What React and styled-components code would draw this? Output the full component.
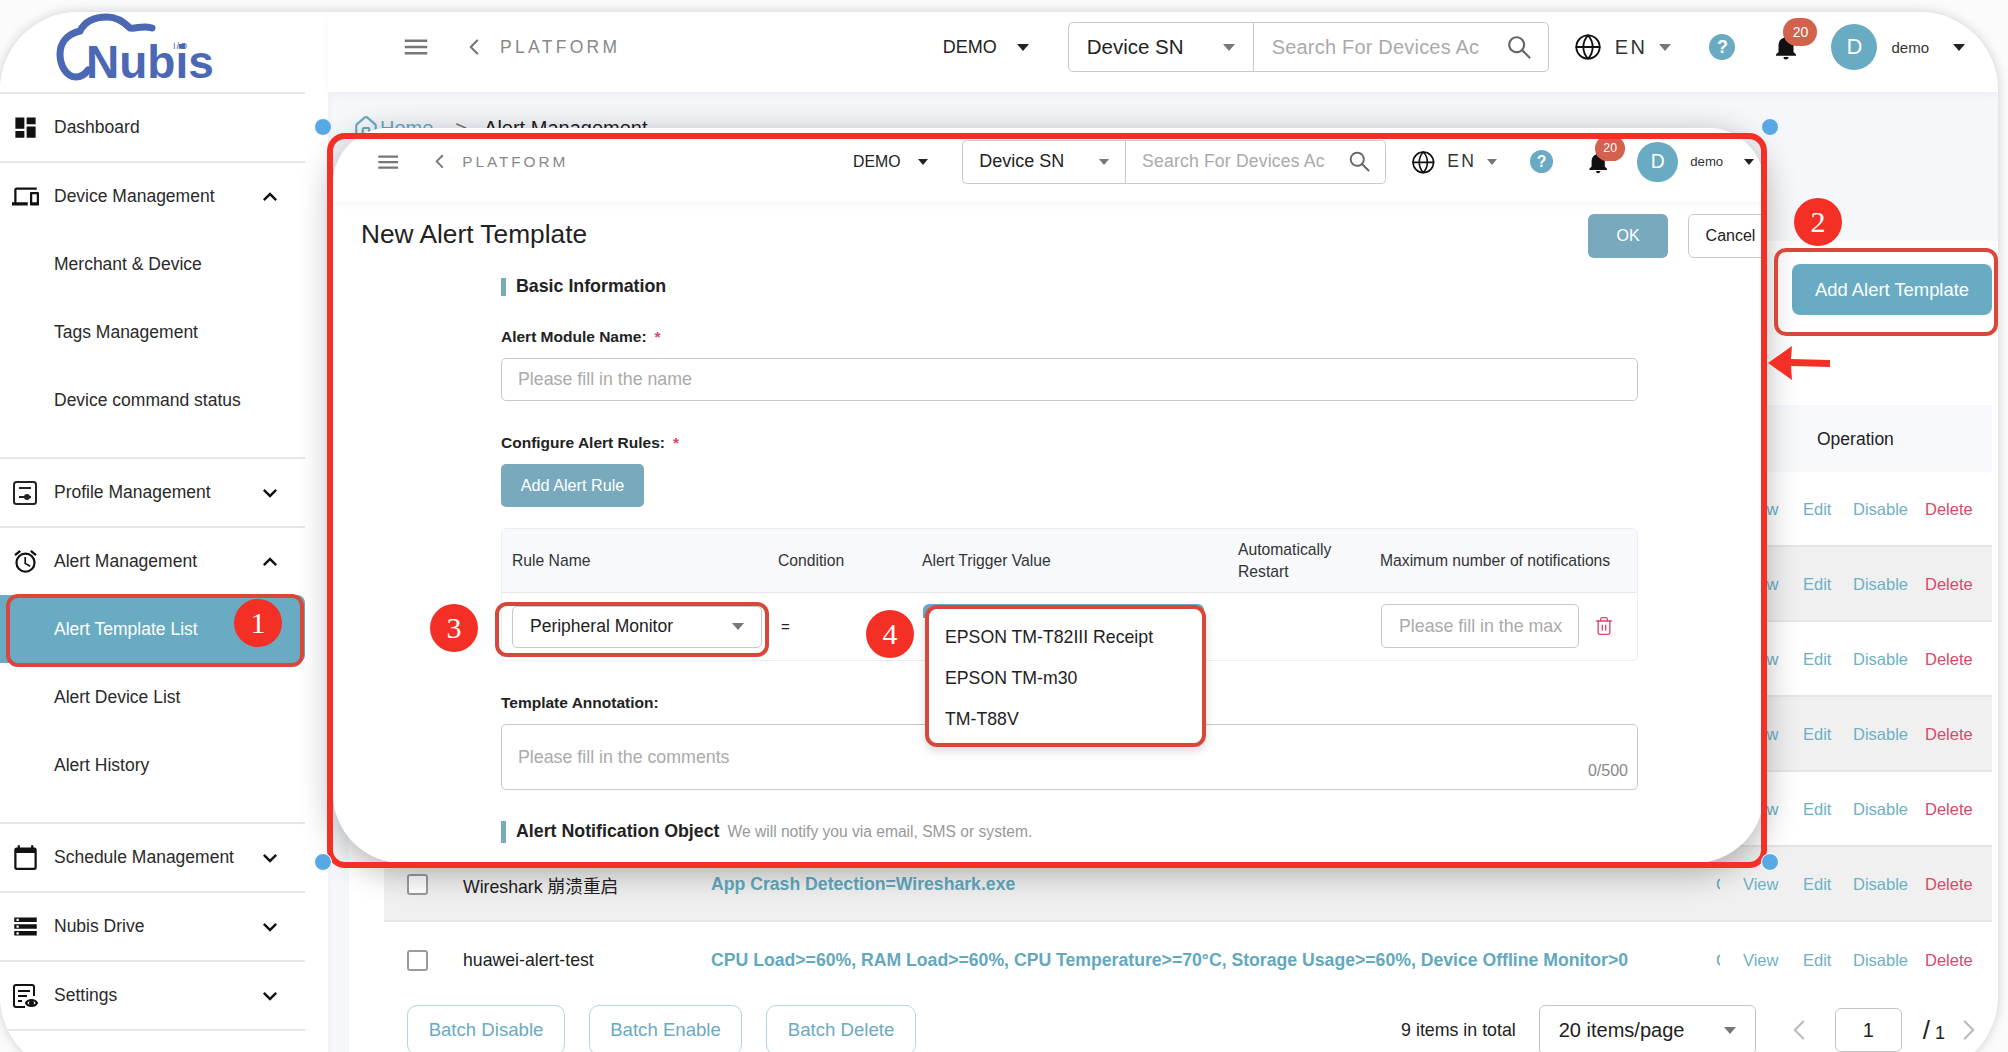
import React from "react";
import styled, { createGlobalStyle } from "styled-components";
import {
  MdDashboard,
  MdOutlineDevices,
  MdOutlineAlarm,
  MdCalendarToday,
  MdStorage,
  MdKeyboardArrowDown,
  MdKeyboardArrowUp,
  MdMenu,
  MdNotifications,
} from "react-icons/md";
import { AiOutlineSearch } from "react-icons/ai";
import { ChevronLeft, ChevronRight, Globe, Trash2, Home } from "lucide-react";

const TEAL = "#68abc2";
const RED = "#f42f25";
const CALLOUT = "#d9473b";
const FONT = `"Liberation Sans", "Noto Sans CJK SC", Arial, sans-serif`;

const GlobalStyle = createGlobalStyle`
  html, body {
    margin: 0;
    padding: 0;
    height: 100%;
    overflow: hidden;
    background: #fff;
  }
  * { box-sizing: border-box; }
  body {
    font-family: ${FONT};
    color: #222;
  }
`;

const Root = styled.div`
  position: relative;
  width: 2008px;
  height: 1052px;
  overflow: hidden;
  background: #fbfbfb;
`;

const Window = styled.div`
  display: flex;
  width: 1998px;
  height: 1062px;
  margin-top: 12px;
  border-radius: 78px;
  overflow: hidden;
  background: #f6f7fb;
  box-shadow: 0 0 12px rgba(0, 0, 0, 0.18);
`;

/* sidebar */
const Sidebar = styled.aside`
  width: 328px;
  flex-shrink: 0;
  padding-right: 23px;
  background: #fff;
  box-shadow: 2px 0 6px rgba(0, 0, 0, 0.03);
`;

const LogoBox = styled.div`
  height: 82px;
  border-bottom: 2px solid #e6e6e6;
`;

const NavGroup = styled.div`
  border-bottom: 2px solid #e6e6e6;
  padding-bottom: ${(p) => p.$pb || 0}px;
`;

const NavRow = styled.div`
  display: flex;
  align-items: center;
  height: 67px;
  padding: 0 21px 0 12px;
  font-size: 17.5px;
  color: #2a2a2a;
`;

const NavIcon = styled.span`
  display: flex;
  align-items: center;
  width: 42px;
  font-size: 27px;
  color: #111;
`;

const NavLabel = styled.span`
  flex: 1;
`;

const NavArrow = styled.span`
  display: flex;
  font-size: 28px;
  color: #111;
`;

const SubItem = styled.div`
  display: flex;
  align-items: center;
  height: 68px;
  padding-left: 54px;
  font-size: 17.5px;
  color: ${(p) => (p.$active ? "#fff" : "#2a2a2a")};
  background: ${(p) => (p.$active ? TEAL : "transparent")};
  border-radius: ${(p) => (p.$active ? "0 8px 8px 0" : "0")};
`;

/* top bar, used at full size and again, shrunk, inside the pasted shot */
const Bar = styled.header`
  display: flex;
  align-items: center;
  height: ${(p) => p.$height}px;
  padding: 0 ${(p) => p.$right}px ${(p) => p.$bottom}px ${(p) => p.$left}px;
  background: #fff;
  box-shadow: 0 3px 8px rgba(0, 0, 0, 0.04);
  ${(p) => (p.$scale ? `zoom: ${p.$scale};` : "")}
  position: relative;
`;

const BurgerIcon = styled(MdMenu)`
  font-size: 30px;
  color: #777;
  margin-right: 30px;
`;

const BackIcon = styled(ChevronLeft)`
  color: #777;
  margin-right: 13px;
`;

const Platform = styled.span`
  font-size: 17.5px;
  letter-spacing: 3.3px;
  color: #888;
`;

const DemoLabel = styled.span`
  margin-left: auto;
  font-size: 18px;
  color: #222;
`;

const Caret = styled.span`
  width: 0;
  height: 0;
  margin-left: ${(p) => p.$ml || 0}px;
  margin-right: ${(p) => p.$mr || 0}px;
  border-left: 6px solid transparent;
  border-right: 6px solid transparent;
  border-top: 7px solid ${(p) => p.$color || "#222"};
`;

const SearchBox = styled.div`
  display: flex;
  align-items: center;
  width: 481px;
  height: 50px;
  border: 1.5px solid #c9c9c9;
  border-radius: 5px;
`;

const SearchType = styled.div`
  display: flex;
  align-items: center;
  justify-content: space-between;
  width: 185px;
  height: 100%;
  padding: 0 18px;
  border-right: 1.5px solid #c9c9c9;
  font-size: 20.5px;
`;

const SearchInput = styled.div`
  display: flex;
  align-items: center;
  justify-content: space-between;
  flex: 1;
  padding: 0 14px 0 18px;
  font-size: 20px;
  letter-spacing: 0.2px;
  color: #aaa;
`;

const SearchIcon = styled(AiOutlineSearch)`
  font-size: 29px;
  color: #666;
`;

const GlobeIcon = styled(Globe)`
  margin-left: ${(p) => p.$ml}px;
  color: #111;
`;

const Lang = styled.span`
  margin-left: 13px;
  font-size: 20px;
  letter-spacing: 2.5px;
  color: #333;
`;

const HelpDot = styled.span`
  display: flex;
  align-items: center;
  justify-content: center;
  width: 26px;
  height: 26px;
  border-radius: 50%;
  background: ${TEAL};
  color: #fff;
  font-weight: 700;
  font-size: 18px;
`;

const BellWrap = styled.span`
  position: relative;
  display: flex;
  font-size: 30px;
  margin-left: 36px;
  color: #111;
`;

const Badge = styled.span`
  position: absolute;
  left: 12px;
  top: -14px;
  width: 34px;
  height: 28px;
  border-radius: 14px;
  background: #d2614e;
  color: #fff;
  font-size: 14px;
  line-height: 28px;
  text-align: center;
`;

const Avatar = styled.span`
  display: flex;
  align-items: center;
  justify-content: center;
  width: 46px;
  height: 46px;
  margin-left: 30px;
  border-radius: 50%;
  background: ${TEAL};
  color: #fff;
  font-size: 22px;
`;

const UserName = styled.span`
  margin-left: 14px;
  font-size: 15px;
  color: #333;
`;

const TopBar = ({ globeGap, ...props }) => (
  <Bar {...props}>
    <BurgerIcon />
    <BackIcon size={26} strokeWidth={2} />
    <Platform>PLATFORM</Platform>
    <DemoLabel>DEMO</DemoLabel>
    <Caret $ml={20} $mr={39} />
    <SearchBox>
      <SearchType>
        Device SN
        <Caret $color="#777" />
      </SearchType>
      <SearchInput>
        Search For Devices Ac
        <SearchIcon />
      </SearchInput>
    </SearchBox>
    <GlobeIcon size={28} strokeWidth={1.6} $ml={globeGap} />
    <Lang>EN</Lang>
    <Caret $ml={12} $mr={38} $color="#777" />
    <HelpDot>?</HelpDot>
    <BellWrap>
      <MdNotifications />
      <Badge>20</Badge>
    </BellWrap>
    <Avatar>D</Avatar>
    <UserName>demo</UserName>
    <Caret $ml={24} />
  </Bar>
);

/* page behind the pasted shot */
const Main = styled.main`
  flex: 1;
  min-width: 0;
  display: flex;
  flex-direction: column;
`;

const Breadcrumb = styled.div`
  display: flex;
  align-items: center;
  gap: 1px;
  height: 24px;
  margin: 24px 0 101px 25px;
  font-size: 20px;
  color: ${TEAL};
`;

const CrumbSep = styled.span`
  margin: 0 16px 0 21px;
  color: #777;
`;

const CrumbNow = styled.span`
  color: #222;
`;

const Card = styled.section`
  flex: 1;
  margin-left: 21px;
  padding: 23px 6px 0 35px;
  background: #fff;
`;

const CardTools = styled.div`
  display: flex;
  justify-content: flex-end;
  margin-bottom: 90px;
`;

const AddButton = styled.button`
  width: 200px;
  height: 51px;
  border: 0;
  border-radius: 8px;
  background: ${TEAL};
  color: #fff;
  font: 18.4px ${FONT};
`;

const ListHead = styled.div`
  display: grid;
  grid-template-columns: 1fr 272px;
  align-items: center;
  height: 67px;
  padding-top: 2px;
  background: #f8f9fc;
  font-size: 17.5px;
`;

const OperationTitle = styled.span`
  padding-left: 97px;
`;

const ListRow = styled.div`
  display: grid;
  grid-template-columns: 79px 248px 1005px 4px 1fr;
  align-items: center;
  height: 75px;
  padding-top: 2px;
  background: ${(p) => (p.$shaded ? "#f0f0f0" : "#fff")};
  border-bottom: 2px solid #e6e6e6;
  ${(p) => (p.$plain ? "border-bottom: 0;" : "")}
`;

const Check = styled.span`
  display: block;
  width: 21px;
  height: 21px;
  margin-left: 23px;
  border: 2px solid #9a9aa5;
  border-radius: 3px;
  background: #fff;
`;

const RowName = styled.span`
  font-size: 17.7px;
  color: #222;
`;

const RowRule = styled.span`
  font-size: 17.65px;
  font-weight: 700;
  color: #62a8be;
  white-space: nowrap;
`;

const RowState = styled.span`
  overflow: hidden;
  font-size: 16.5px;
  color: #62a8be;
`;

const Ops = styled.div`
  display: grid;
  grid-template-columns: 60px 50px 72px auto;
  padding-left: 23px;
  font-size: 16.5px;
`;

const OpLink = styled.span`
  color: ${(p) => (p.$danger ? "#d9486b" : "#6db0c6")};
`;

const ListFoot = styled.div`
  display: flex;
  align-items: flex-start;
  padding: 8px 6px 0 23px;
`;

const BatchButton = styled.button`
  width: ${(p) => p.$w}px;
  height: 50px;
  margin-right: 24px;
  border: 1.5px solid #b4d6e1;
  border-radius: 10px;
  background: #fff;
  color: ${TEAL};
  font: 18.6px ${FONT};
`;

const TotalText = styled.span`
  margin-left: auto;
  padding-top: 15px;
  font-size: 17.8px;
`;

const PageSize = styled.div`
  display: flex;
  align-items: center;
  justify-content: space-between;
  width: 217px;
  height: 50px;
  margin-left: 23px;
  padding: 0 19px;
  border: 1.5px solid #c4c4c4;
  border-radius: 6px;
  font-size: 20px;
`;

const PageNav = styled.span`
  display: flex;
  align-items: center;
  height: 50px;
  margin-left: ${(p) => p.$ml}px;
  color: #bbb;
`;

const PageInput = styled.div`
  display: flex;
  align-items: center;
  justify-content: center;
  width: 67px;
  height: 44px;
  margin: 3px 0 0 19px;
  border: 1.5px solid #c4c4c4;
  border-radius: 6px;
  font-size: 20px;
`;

const PageTotal = styled.span`
  padding-top: 10px;
  margin-left: 21px;
  font-size: 18px;
`;

const Slash = styled.span`
  font-size: 26px;
`;

/* pasted screenshot of the form */
const Shot = styled.div`
  position: absolute;
  left: 333px;
  top: 128px;
  width: 1431px;
  height: 735px;
  overflow: hidden;
  background: #fff;
  border-radius: 56px 56px 70px 70px;
`;

const ShotShadow = styled.div`
  position: absolute;
  left: 333px;
  top: 128px;
  width: 1431px;
  height: 735px;
  border-radius: 56px 56px 70px 70px;
  box-shadow: 0 8px 34px rgba(0, 0, 0, 0.32);
`;

const TitleRow = styled.div`
  display: flex;
  align-items: flex-start;
  margin: 12px -9px 0 0;
  padding-left: 28px;
`;

const ShotTitle = styled.h1`
  flex: 1;
  margin: 0;
  padding-top: 5px;
  font-size: 26.3px;
  line-height: 30px;
  font-weight: 400;
  color: #222;
`;

const ShotButton = styled.button`
  width: ${(p) => p.$w}px;
  height: 44px;
  margin-left: ${(p) => p.$ml}px;
  border: ${(p) => (p.$primary ? "0" : "1.5px solid #c9c9c9")};
  border-radius: 6px;
  background: ${(p) => (p.$primary ? "#78a9bd" : "#fff")};
  color: ${(p) => (p.$primary ? "#fff" : "#222")};
  font: 16px ${FONT};
  flex-shrink: 0;
`;

const Form = styled.div`
  width: 1137px;
  margin-left: 168px;
`;

const SectionTitle = styled.div`
  display: flex;
  align-items: center;
  height: ${(p) => p.$h || 18}px;
  margin-top: ${(p) => p.$mt}px;
  padding-left: 10px;
  border-left: 5px solid #78a9bd;
  font-size: 17.8px;
  font-weight: 700;
  color: #222;
`;

const SectionNote = styled.span`
  margin-left: 8px;
  font-size: 15.6px;
  font-weight: 400;
  color: #999;
`;

const FieldLabel = styled.div`
  height: 18px;
  margin-top: ${(p) => p.$mt}px;
  font-size: 15.5px;
  line-height: 18px;
  font-weight: 700;
  color: #222;
`;

const Star = styled.span`
  margin-left: 8px;
  color: #d9486b;
`;

const TextField = styled.div`
  display: flex;
  align-items: center;
  height: 43px;
  margin-top: 12px;
  padding-left: 16px;
  border: 1.5px solid #c9c9c9;
  border-radius: 5px;
  font-size: 17.8px;
  color: #aaa;
`;

const RuleButton = styled.button`
  display: block;
  width: 143px;
  height: 43px;
  margin-top: 12px;
  border: 0;
  border-radius: 5px;
  background: #78a9bd;
  color: #fff;
  font: 16.2px ${FONT};
`;

const RuleTable = styled.div`
  margin-top: 21px;
  border: 1.5px solid #eceef2;
  border-radius: 5px;
`;

const RuleHead = styled.div`
  display: grid;
  grid-template-columns: 266px 144px 316px 142px 1fr;
  align-items: center;
  height: 64px;
  padding: 1px 0 0 10px;
  background: #f8f9fc;
  border-bottom: 1.5px solid #e6e8ee;
  font-size: 15.7px;
  line-height: 22px;
  color: #333;
`;

const RuleRow = styled.div`
  display: grid;
  grid-template-columns: 266px 144px 459px 198px 1fr;
  align-items: center;
  height: 67px;
  padding-left: 10px;
`;

const RuleSelect = styled.div`
  display: flex;
  align-items: center;
  justify-content: space-between;
  width: 250px;
  height: 42px;
  margin-top: 1px;
  padding: 0 17px;
  border: 1.5px solid #c9c9c9;
  border-radius: 5px;
  font-size: 17.5px;
`;

const Equal = styled.span`
  padding-left: 3px;
  font-size: 15px;
`;

const MaxField = styled.div`
  display: flex;
  align-items: center;
  height: 44px;
  padding-left: 17px;
  border: 1.5px solid #c9c9c9;
  border-radius: 5px;
  font-size: 17.8px;
  color: #aaa;
  white-space: nowrap;
  overflow: hidden;
`;

const TrashIcon = styled(Trash2)`
  margin-left: 15px;
  color: #d9486b;
`;

const NoteField = styled.div`
  position: relative;
  height: 66px;
  margin-top: 12px;
  padding: 22px 0 0 16px;
  border: 1.5px solid #c9c9c9;
  border-radius: 5px;
  font-size: 17.8px;
  color: #aaa;
`;

const Counter = styled.span`
  position: absolute;
  right: 9px;
  bottom: 9px;
  font-size: 16px;
  color: #888;
`;

/* annotations drawn over everything */
const Frame = styled.div`
  position: absolute;
  left: ${(p) => p.$x}px;
  top: ${(p) => p.$y}px;
  width: ${(p) => p.$w}px;
  height: ${(p) => p.$h}px;
  border: ${(p) => p.$border || 4}px solid ${(p) => p.$color || CALLOUT};
  border-radius: ${(p) => p.$radius || 12}px;
`;

const Marker = styled.div`
  position: absolute;
  left: ${(p) => p.$x - 24}px;
  top: ${(p) => p.$y - 24}px;
  width: 48px;
  height: 48px;
  border-radius: 50%;
  background: ${RED};
  color: #fff;
  font: 30px/48px "Liberation Serif", serif;
  text-align: center;
`;

const Handle = styled.div`
  position: absolute;
  left: ${(p) => p.$x - 9}px;
  top: ${(p) => p.$y - 9}px;
  width: 18px;
  height: 18px;
  border-radius: 50%;
  border: 1.5px solid #fff;
  background: #57a8e4;
`;

const MenuStrip = styled.div`
  position: absolute;
  left: 923px;
  top: 604px;
  width: 281px;
  height: 14px;
  border-radius: 6px 6px 0 0;
  background: ${TEAL};
`;

const Menu = styled.div`
  position: absolute;
  left: 925px;
  top: 605px;
  width: 281px;
  height: 142px;
  padding: 8px 0 0 16px;
  border: 4px solid ${CALLOUT};
  border-radius: 12px;
  background: #fff;
  box-shadow: 0 4px 10px rgba(0, 0, 0, 0.14);
`;

const MenuItem = styled.div`
  display: flex;
  align-items: center;
  height: 41px;
  font-size: 17.7px;
  color: #222;
`;

const ArrowMark = styled.svg`
  position: absolute;
  left: 1766px;
  top: 344px;
`;

const Logo = () => (
  <svg width="230" height="80" viewBox="0 12 230 80">
    <path
      d="M88 70 C84 76 80 77 76 77 C66 77 60 65 60 54 C60 42 68 34 80 31 C85 21 95 17 107 17 C118 17 125 23 130 28 C137 29 142 25 152 28"
      fill="none"
      stroke="#4a68b3"
      strokeWidth="7"
      strokeLinecap="round"
    />
    <text x="86" y="78" fontFamily="Liberation Sans" fontWeight="700" fontSize="46" fill="#4a68b3">
      Nubis
    </text>
    <text x="173" y="49" fontFamily="Liberation Sans" fontSize="9" letterSpacing="1" fill="#4a68b3">
      I/O
    </text>
  </svg>
);

const ProfileIcon = () => (
  <svg width="26" height="26" viewBox="0 0 26 26" fill="none" stroke="#222" strokeWidth="2">
    <rect x="2" y="2" width="22" height="22" rx="2.5" />
    <path d="M7 8 H19 M7 17 H19" />
    <circle cx="15" cy="17" r="2" fill="#222" />
  </svg>
);

const SettingsIcon = () => (
  <svg width="26" height="26" viewBox="0 0 26 26" fill="none" stroke="#111" strokeWidth="2">
    <path d="M13 24 H4 a2 2 0 0 1 -2 -2 V4 a2 2 0 0 1 2 -2 H20 a2 2 0 0 1 2 2 V13" />
    <path d="M6 8 H18 M6 13 H15 M6 18 H10" />
    <path d="M14 20 C16 16 23 16 25 20 C23 24 16 24 14 20 Z" fill="#fff" />
    <circle cx="19.5" cy="20" r="1.5" fill="#111" />
  </svg>
);

const navGroups = [
  { label: "Dashboard", icon: <MdDashboard /> },
  {
    label: "Device Management",
    icon: <MdOutlineDevices />,
    open: true,
    subs: ["Merchant & Device", "Tags Management", "Device command status"],
  },
  { label: "Profile Management", icon: <ProfileIcon />, closed: true },
  {
    label: "Alert Management",
    icon: <MdOutlineAlarm />,
    open: true,
    subs: ["Alert Template List", "Alert Device List", "Alert History"],
  },
  { label: "Schedule Management", icon: <MdCalendarToday />, closed: true },
  { label: "Nubis Drive", icon: <MdStorage />, closed: true },
  { label: "Settings", icon: <SettingsIcon />, closed: true },
];

const rows = [
  {},
  { shaded: true },
  {},
  { shaded: true },
  {},
  { shaded: true, name: "Wireshark 崩溃重启", rule: "App Crash Detection=Wireshark.exe" },
  {
    plain: true,
    name: "huawei-alert-test",
    rule: "CPU Load>=60%, RAM Load>=60%, CPU Temperature>=70°C, Storage Usage>=60%, Device Offline Monitor>0",
  },
];

const App = () => (
  <Root>
    <GlobalStyle />
    <Window>
      <Sidebar>
        <LogoBox>
          <Logo />
        </LogoBox>
        {navGroups.map((group) => (
          <NavGroup key={group.label} $pb={group.subs ? 23 : 0}>
            <NavRow>
              <NavIcon>{group.icon}</NavIcon>
              <NavLabel>{group.label}</NavLabel>
              {group.open && (
                <NavArrow>
                  <MdKeyboardArrowUp />
                </NavArrow>
              )}
              {group.closed && (
                <NavArrow>
                  <MdKeyboardArrowDown />
                </NavArrow>
              )}
            </NavRow>
            {group.subs &&
              group.subs.map((sub) => (
                <SubItem key={sub} $active={sub === "Alert Template List"}>
                  {sub}
                </SubItem>
              ))}
          </NavGroup>
        ))}
      </Sidebar>
      <Main>
        <TopBar $height={80} $bottom={10} $left={73} $right={33} globeGap={25} />
        <Breadcrumb>
          <Home size={26} />
          Home
          <CrumbSep>&gt;</CrumbSep>
          <CrumbNow>Alert Management</CrumbNow>
        </Breadcrumb>
        <Card>
          <CardTools>
            <AddButton>Add Alert Template</AddButton>
          </CardTools>
          <ListHead>
            <span />
            <OperationTitle>Operation</OperationTitle>
          </ListHead>
          {rows.map((row, i) => (
            <ListRow key={i} $shaded={row.shaded} $plain={row.plain}>
              <Check />
              <RowName>{row.name}</RowName>
              <RowRule>{row.rule}</RowRule>
              <RowState>Close</RowState>
              <Ops>
                <OpLink>View</OpLink>
                <OpLink>Edit</OpLink>
                <OpLink>Disable</OpLink>
                <OpLink $danger>Delete</OpLink>
              </Ops>
            </ListRow>
          ))}
          <ListFoot>
            <BatchButton $w={158}>Batch Disable</BatchButton>
            <BatchButton $w={153}>Batch Enable</BatchButton>
            <BatchButton $w={150}>Batch Delete</BatchButton>
            <TotalText>9 items in total</TotalText>
            <PageSize>
              20 items/page
              <Caret $color="#777" />
            </PageSize>
            <PageNav $ml={26}>
              <ChevronLeft size={34} strokeWidth={1.5} />
            </PageNav>
            <PageInput>1</PageInput>
            <PageTotal>
              <Slash>/</Slash> 1
            </PageTotal>
            <PageNav $ml={7}>
              <ChevronRight size={34} strokeWidth={1.5} />
            </PageNav>
          </ListFoot>
        </Card>
      </Main>
    </Window>

    <ShotShadow />
    <Shot>
      <TopBar $height={84} $bottom={7} $left={48} $right={11} $scale={0.88} globeGap={29} />
      <TitleRow>
        <ShotTitle>New Alert Template</ShotTitle>
        <ShotButton $primary $w={80} $ml={0}>
          OK
        </ShotButton>
        <ShotButton $w={85} $ml={20}>
          Cancel
        </ShotButton>
      </TitleRow>
      <Form>
        <SectionTitle $mt={20}>Basic Information</SectionTitle>
        <FieldLabel $mt={32}>
          Alert Module Name:<Star>*</Star>
        </FieldLabel>
        <TextField>Please fill in the name</TextField>
        <FieldLabel $mt={33}>
          Configure Alert Rules:<Star>*</Star>
        </FieldLabel>
        <RuleButton>Add Alert Rule</RuleButton>
        <RuleTable>
          <RuleHead>
            <span>Rule Name</span>
            <span>Condition</span>
            <span>Alert Trigger Value</span>
            <span>
              Automatically
              <br />
              Restart
            </span>
            <span>Maximum number of notifications</span>
          </RuleHead>
          <RuleRow>
            <RuleSelect>
              Peripheral Monitor
              <Caret $color="#777" />
            </RuleSelect>
            <Equal>=</Equal>
            <span />
            <MaxField>Please fill in the max</MaxField>
            <TrashIcon size={20} strokeWidth={1.6} />
          </RuleRow>
        </RuleTable>
        <FieldLabel $mt={33}>Template Annotation:</FieldLabel>
        <NoteField>
          Please fill in the comments
          <Counter>0/500</Counter>
        </NoteField>
        <SectionTitle $mt={31} $h={22}>
          Alert Notification Object
          <SectionNote>We will notify you via email, SMS or system.</SectionNote>
        </SectionTitle>
      </Form>
    </Shot>

    <Frame $x={327} $y={133} $w={1440} $h={735} $border={6} $color={RED} $radius={18} />
    <Handle $x={323} $y={127} />
    <Handle $x={1770} $y={127} />
    <Handle $x={323} $y={862} />
    <Handle $x={1770} $y={862} />

    <Frame $x={6} $y={594} $w={298} $h={73} />
    <Frame $x={1774} $y={248} $w={224} $h={88} />
    <Frame $x={495} $y={602} $w={274} $h={55} />
    <MenuStrip />
    <Menu>
      <MenuItem>EPSON TM-T82III Receipt</MenuItem>
      <MenuItem>EPSON TM-m30</MenuItem>
      <MenuItem>TM-T88V</MenuItem>
    </Menu>

    <ArrowMark width="66" height="38" viewBox="0 0 66 38">
      <path d="M2 19 L26 2 L25 15 L64 16 L64 23 L25 22 L26 36 Z" fill={RED} />
    </ArrowMark>

    <Marker $x={258} $y={623}>1</Marker>
    <Marker $x={1818} $y={222}>2</Marker>
    <Marker $x={454} $y={628}>3</Marker>
    <Marker $x={890} $y={634}>4</Marker>
  </Root>
);

export default App;
